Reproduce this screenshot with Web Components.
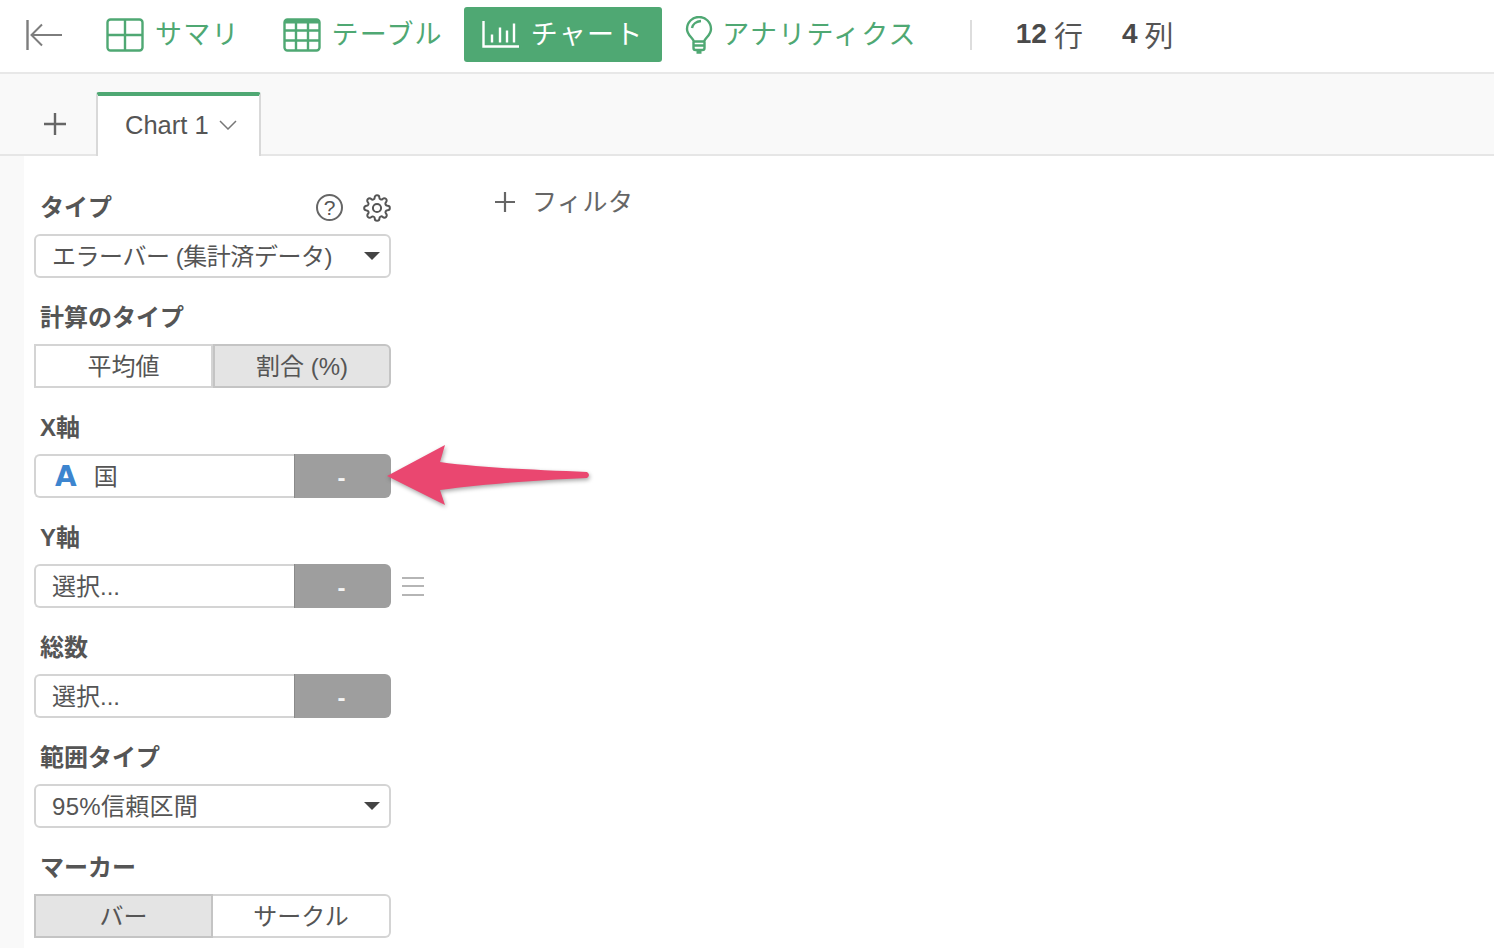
<!DOCTYPE html>
<html lang="ja">
<head>
<meta charset="utf-8">
<title>Chart</title>
<style>
  html, body { margin: 0; height: 948px; overflow: hidden; background: #fff; }
  body { font-family: "Liberation Sans", "Noto Sans CJK JP", sans-serif; color: #555; }
  svg { display: block; }
</style>
</head>
<body>
<app-nav>
  <nav-item label="サマリ">
    <svg slot="icon" width="38" height="34" viewBox="0 0 38 34" fill="none" stroke="#4fa873" stroke-width="2.400"><rect x="1.500" y="1.500" width="35" height="31" rx="3"/><path d="M19 2v30M2 17h34"/></svg>
  </nav-item>
  <nav-item style="margin-left:6px" label="テーブル">
    <svg slot="icon" width="38" height="34" viewBox="0 0 38 34" fill="none" stroke="#4fa873" stroke-width="2.400"><rect x="1.500" y="1.500" width="35" height="31" rx="3"/><path d="M13 2v30M25 2v30M2 12.500h34M2 22.500h34"/><path d="M2 3.500h34" stroke-width="4"/></svg>
  </nav-item>
  <nav-item style="margin-left:2px" label="チャート" active>
    <svg slot="icon" width="38" height="28" viewBox="0 0 38 28" fill="none" stroke="#fff" stroke-width="2.400"><path d="M1.500 0v25.500H37"/><path d="M10 13.500v8M18 6.500v15M25 9.500v12M32 2.500v19"/></svg>
  </nav-item>
  <nav-item style="margin-left:5px" label="アナリティクス" tight>
    <svg slot="icon" width="28" height="38" viewBox="0 0 28 38" fill="none" stroke="#4fa873" stroke-width="2.400"><path d="M9 25.500C7.500 21.500 2 19 2 13a12 12 0 0 1 24 0c0 6-5.500 8.500-7 12.500z"/><path d="M7 12c.5-3.500 4-6.500 9-7"/><path d="M8.500 25.500V32q0 2 2 2h7q2 0 2-2v-6.500M9 29.500h10M11.500 36.500h5"/></svg>
  </nav-item>
  <row-counts></row-counts>
</app-nav>

<tab-bar></tab-bar>

<main-area>
  <field-group label="タイプ">
    <help-tools slot="tools"></help-tools>
    <select-box style="letter-spacing:-.45px">エラーバー (集計済データ)</select-box>
  </field-group>
  <field-group label="計算のタイプ">
    <toggle-group first="平均値" second="割合 (%)" selected="2"></toggle-group>
  </field-group>
  <field-group label="X軸">
    <col-picker><type-mark></type-mark>国</col-picker>
  </field-group>
  <field-group label="Y軸">
    <col-picker menu>選択...</col-picker>
  </field-group>
  <field-group label="総数">
    <col-picker>選択...</col-picker>
  </field-group>
  <field-group label="範囲タイプ">
    <select-box style="letter-spacing:.3px">95%信頼区間</select-box>
  </field-group>
  <field-group label="マーカー">
    <toggle-group first="バー" second="サークル" selected="1"></toggle-group>
  </field-group>
  <filter-add slot="side">フィルタ</filter-add>
  <callout-arrow slot="side"></callout-arrow>
</main-area>

<script>
// small helper so each class only has to give its markup
function shadow(el, html) {
  el.attachShadow({mode: 'open'}).innerHTML = html;
}

class AppNav extends HTMLElement {
  constructor() {
    super();
    shadow(this, `
      <style>
        :host { display: block; height: 72px; border-bottom: 2px solid #e8e8e8; background: #fff; }
        .bar { display: flex; align-items: center; height: 69px; }
        .back { margin-left: 26px; margin-right: 26px; }
      </style>
      <div class="bar">
        <svg class="back" width="36" height="30" viewBox="0 0 36 30" fill="none" stroke="#7d7d7d" stroke-width="2"><path d="M1.500 0v30" stroke-width="2.400"/><path d="M36 15H6M16 4.500 5.500 15 16 25.500"/></svg>
        <slot></slot>
      </div>`);
  }
}

class NavItem extends HTMLElement {
  constructor() {
    super();
    const active = this.hasAttribute('active');
    const gap = this.hasAttribute('tight') ? 9 : 11;
    shadow(this, `
      <style>
        :host { display: block; }
        .item {
          display: flex; align-items: center; gap: ${gap}px; height: 55px;
          padding: 0 19px 0 18px; border-radius: 3px; box-sizing: border-box;
          font-size: 27px; letter-spacing: 1.200px; color: ${active ? '#fff' : '#4fa873'};
          background: ${active ? '#4fa873' : 'transparent'};
          white-space: nowrap;
        }
        span { padding-bottom: 4px; }
      </style>
      <div class="item"><slot name="icon"></slot><span>${this.getAttribute('label')}</span></div>`);
  }
}

class RowCounts extends HTMLElement {
  constructor() {
    super();
    shadow(this, `
      <style>
        :host { display: flex; align-items: center; height: 30px; margin-left: 34px; padding-left: 44px; border-left: 2px solid #ddd; font-size: 29px; color: #555; white-space: nowrap; }
        b, span { padding-bottom: 2px; }
        b { margin-right: 7px; font-size: 28px; color: #4a4a4a; }
        span + b { margin-left: 39px; margin-right: 7px; }
      </style>
      <b>12</b><span>行</span><b>4</b><span>列</span>`);
  }
}

class TabBar extends HTMLElement {
  constructor() {
    super();
    shadow(this, `
      <style>
        :host { display: flex; align-items: flex-end; height: 80px; background: #f9f9f9; border-bottom: 2px solid #e6e6e6; padding-left: 24px; }
        .add { width: 62px; height: 60px; padding: 2px 10px 0 0; display: flex; align-items: center; justify-content: center; }
        .tab {
          display: flex; align-items: center; gap: 10px; box-sizing: border-box;
          width: 165px; height: 64px; margin-bottom: -2px; padding: 0 0 2px 27px;
          background: #fff; border: 2px solid #d9d9d9; border-bottom: 0; border-top: 4px solid #4fa873;
          border-radius: 3px 3px 0 0; font-size: 25.500px; color: #555; white-space: nowrap;
        }
      </style>
      <div class="add">
        <svg width="22" height="22" viewBox="0 0 22 22" stroke="#666" stroke-width="2.400"><path d="M11 0v22M0 11h22"/></svg>
      </div>
      <div class="tab">
        <span>Chart 1</span>
        <svg width="18" height="10" viewBox="0 0 18 10" fill="none" stroke="#777" stroke-width="1.500"><path d="M1 1l8 8 8-8"/></svg>
      </div>`);
  }
}

class MainArea extends HTMLElement {
  constructor() {
    super();
    shadow(this, `
      <style>
        :host { display: grid; grid-template-columns: 445px 1fr; height: 792px; margin-left: 24px; position: relative; background: #fff; }
        :host::before { content: ""; position: absolute; left: -24px; top: 0; bottom: 0; width: 24px; background: #f9f9f9; }
        .controls { padding: 11px 0 0 10px; width: 357px; }
      </style>
      <div class="controls"><slot></slot></div>
      <div class="side"><slot name="side"></slot></div>`);
  }
}

class FieldGroup extends HTMLElement {
  constructor() {
    super();
    shadow(this, `
      <style>
        :host { display: block; height: 110px; }
        .head { display: flex; align-items: center; height: 36px; padding: 20px 0 11px 6px; }
        h3 { margin: 0; font-size: 24px; font-weight: 700; color: #555; }
        ::slotted([slot=tools]) { margin-left: auto; }
      </style>
      <div class="head"><h3>${this.getAttribute('label')}</h3><slot name="tools"></slot></div>
      <slot></slot>`);
  }
}

class HelpTools extends HTMLElement {
  constructor() {
    super();
    shadow(this, `
      <style>
        :host { display: flex; align-items: center; gap: 20px; padding-top: 5px; }
        .help { width: 23px; height: 23px; border: 2px solid #666; border-radius: 50%; display: flex; align-items: center; justify-content: center; font-size: 21px; color: #555; }
      </style>
      <div class="help">?</div>
      <svg width="28" height="28" viewBox="0 0 24 24" fill="none" stroke="#555" stroke-width="1.700"><circle cx="12" cy="12" r="3.500"/><path d="M19.400 15a1.650 1.650 0 0 0 .33 1.820l.06.06a2 2 0 0 1 0 2.830 2 2 0 0 1-2.830 0l-.06-.06a1.650 1.650 0 0 0-1.820-.33 1.650 1.650 0 0 0-1 1.510V21a2 2 0 0 1-2 2 2 2 0 0 1-2-2v-.09A1.650 1.650 0 0 0 9 19.400a1.650 1.650 0 0 0-1.820.33l-.06.06a2 2 0 0 1-2.830 0 2 2 0 0 1 0-2.830l.06-.06a1.650 1.650 0 0 0 .33-1.820 1.650 1.650 0 0 0-1.510-1H3a2 2 0 0 1-2-2 2 2 0 0 1 2-2h.09A1.650 1.650 0 0 0 4.600 9a1.650 1.650 0 0 0-.33-1.820l-.06-.06a2 2 0 0 1 0-2.830 2 2 0 0 1 2.830 0l.06.06a1.650 1.650 0 0 0 1.820.33H9a1.650 1.650 0 0 0 1-1.510V3a2 2 0 0 1 2-2 2 2 0 0 1 2 2v.09a1.650 1.650 0 0 0 1 1.510 1.650 1.650 0 0 0 1.820-.33l.06-.06a2 2 0 0 1 2.830 0 2 2 0 0 1 0 2.830l-.06.06a1.650 1.650 0 0 0-.33 1.820V9a1.650 1.650 0 0 0 1.510 1H21a2 2 0 0 1 2 2 2 2 0 0 1-2 2h-.09a1.650 1.650 0 0 0-1.510 1z"/></svg>`);
  }
}

class SelectBox extends HTMLElement {
  constructor() {
    super();
    shadow(this, `
      <style>
        :host { display: block; }
        .box { display: flex; align-items: center; box-sizing: border-box; width: 357px; height: 44px; padding: 0 9px 0 16px; background: #fff; border: 2px solid #d4d4d4; border-radius: 6px; font-size: 24px; color: #555; white-space: nowrap; }
        span { padding-bottom: 4px; }
        .caret { margin-left: auto; width: 0; height: 0; border: 8px solid transparent; border-top-color: #444; border-bottom: 0; }
      </style>
      <div class="box"><span><slot></slot></span><div class="caret"></div></div>`);
  }
}

class ToggleGroup extends HTMLElement {
  constructor() {
    super();
    const sel = this.getAttribute('selected');
    const cls = n => n === sel ? 'on' : '';
    shadow(this, `
      <style>
        :host { display: grid; grid-template-columns: 179px 178px; width: 357px; height: 44px; font-size: 24px; color: #555; }
        div { display: flex; align-items: center; justify-content: center; box-sizing: border-box; padding-bottom: 4px; white-space: nowrap; background: #fff; border: 2px solid #d4d4d4; }
        div:first-child { border-radius: 6px 0 0 6px; border-right: 0; }
        div:last-child { border-radius: 0 6px 6px 0; border-left: 0; }
        div.on { background: #e4e4e4; border: 2px solid #c4c4c4; }
      </style>
      <div class="${cls('1')}">${this.getAttribute('first')}</div>
      <div class="${cls('2')}">${this.getAttribute('second')}</div>`);
  }
}

class ColPicker extends HTMLElement {
  constructor() {
    super();
    const menu = this.hasAttribute('menu');
    shadow(this, `
      <style>
        :host { display: flex; align-items: center; gap: 11px; width: 425px; }
        .box { display: flex; width: 357px; height: 44px; font-size: 24px; color: #555; }
        .val { display: flex; align-items: center; flex: 1; box-sizing: border-box; padding: 0 0 4px 16px; background: #fff; border: 2px solid #d4d4d4; border-right: 0; border-radius: 6px 0 0 6px; white-space: nowrap; }
        .btn { width: 97px; padding: 3px 3px 0 0; display: flex; align-items: center; justify-content: center; background: #9e9e9e; color: #f4f4f4; font-size: 24px; font-weight: 700; border-left: 1px solid #8a8a8a; box-sizing: border-box; border-radius: 0 6px 6px 0; }
        .menu { width: 22px; height: 15px; border-top: 2px solid #b5b5b5; border-bottom: 2px solid #b5b5b5; position: relative; }
        .menu::after { content: ""; position: absolute; left: 0; right: 0; top: 6.500px; height: 2px; background: #b5b5b5; }
      </style>
      <div class="box"><div class="val"><slot></slot></div><div class="btn">-</div></div>
      ${menu ? '<div class="menu"></div>' : ''}`);
  }
}

class TypeMark extends HTMLElement {
  constructor() {
    super();
    shadow(this, `
      <style>
        :host { display: block; margin: 4px 17px 0 3px; font-family: "DejaVu Sans", sans-serif; font-weight: 700; font-size: 28px; color: #3d85cf; }
      </style>A`);
  }
}

class FilterAdd extends HTMLElement {
  constructor() {
    super();
    shadow(this, `
      <style>
        :host { display: flex; align-items: center; gap: 17px; margin: 26px 0 0 26px; height: 40px; font-size: 25px; letter-spacing: .5px; color: #666; }
        span { padding-bottom: 4px; }
      </style>
      <svg width="20" height="20" viewBox="0 0 20 20" stroke="#666" stroke-width="2.200"><path d="M10 0v20M0 10h20"/></svg>
      <span><slot></slot></span>`);
  }
}

class CalloutArrow extends HTMLElement {
  constructor() {
    super();
    shadow(this, `
      <style>
        /* annotation drawn over the form */
        :host { position: absolute; left: 357px; top: 285px; width: 215px; height: 70px; }
        svg { overflow: visible; filter: drop-shadow(1px 2px 2px rgba(0,0,0,.35)); }
      </style>
      <svg width="215" height="70" viewBox="0 0 215 70"><path fill="#ea4770" d="M6 35 64 4 59 21C100 27 160 29 206 31Q210 34 206 37C160 39 100 43 59 49L64 64Z"/></svg>`);
  }
}

customElements.define('app-nav', AppNav);
customElements.define('nav-item', NavItem);
customElements.define('row-counts', RowCounts);
customElements.define('tab-bar', TabBar);
customElements.define('main-area', MainArea);
customElements.define('field-group', FieldGroup);
customElements.define('help-tools', HelpTools);
customElements.define('select-box', SelectBox);
customElements.define('toggle-group', ToggleGroup);
customElements.define('col-picker', ColPicker);
customElements.define('type-mark', TypeMark);
customElements.define('filter-add', FilterAdd);
customElements.define('callout-arrow', CalloutArrow);
</script>
</body>
</html>
